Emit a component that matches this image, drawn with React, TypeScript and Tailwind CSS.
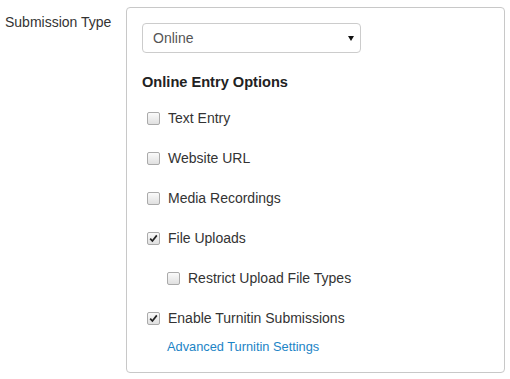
import React from "react";

function Box({ checked }: { checked?: boolean }) {
  return (
    <span className="flex h-[13px] w-[13px] shrink-0 items-center justify-center rounded-[2px] border border-[#aaa] bg-gradient-to-b from-[#fafafa] to-[#e0e0e0]">
      {checked && (
        <svg width="9" height="9" viewBox="0 0 9 9">
          <path d="M1.2 4.6 L3.4 7 L7.8 1.4" fill="none" stroke="#222" strokeWidth="1.7" />
        </svg>
      )}
    </span>
  );
}

function Row({ label, checked, indent }: { label: string; checked?: boolean; indent?: boolean }) {
  return (
    <div className={`flex h-[40px] items-center gap-[8px] ${indent ? "pl-[25px]" : "pl-[5px]"}`}>
      <Box checked={checked} />
      <span>{label}</span>
    </div>
  );
}

export default function App() {
  return (
    <div className="flex w-[510px] h-[379px] bg-white text-[14px] text-[#333] [font-family:'Liberation_Sans',Arial,sans-serif]">
      <div className="w-[126px] pl-[5px] pt-[12px] leading-[20px]">Submission Type</div>
      <div className="mt-[7px] h-[366px] w-[379px] rounded-[4px] border border-[#c8c8c8] pl-[15px] pt-[15px]">
        <div className="flex h-[30px] w-[219px] items-center justify-between rounded-[4px] border border-[#ccc] pl-[10px] pr-[6px] text-[#555]">
          <span>Online</span>
          <svg width="6" height="5" viewBox="0 0 6 5">
            <path d="M0 0 H6 L3 5 Z" fill="#111" />
          </svg>
        </div>
        <div className="mt-[19px] font-bold text-[14.6px] leading-[20px] text-[#222]">Online Entry Options</div>
        <div className="mt-[6px]">
          <Row label="Text Entry" />
          <Row label="Website URL" />
          <Row label="Media Recordings" />
          <Row label="File Uploads" checked />
          <Row label="Restrict Upload File Types" indent />
          <Row label="Enable Turnitin Submissions" checked />
          <div className="pl-[25px] pt-[1px] text-[12.8px] leading-[16px] text-[#1c84c6]">Advanced Turnitin Settings</div>
        </div>
      </div>
    </div>
  );
}
